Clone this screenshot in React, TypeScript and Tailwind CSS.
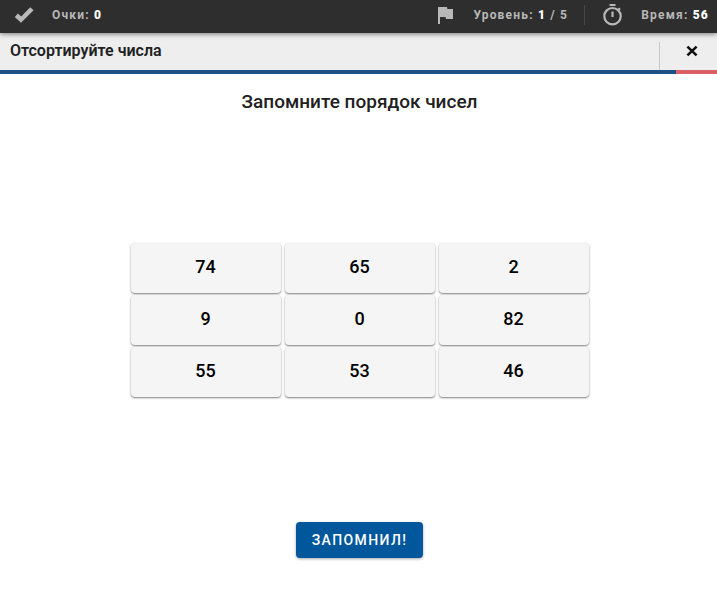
import { MdFlag } from "react-icons/md";

const numbers = [74, 65, 2, 9, 0, 82, 55, 53, 46];

const CheckIcon = () => (
  <svg viewBox="0 0 20 16" className="h-4 w-5 shrink-0" fill="currentColor" aria-hidden="true">
    <path d="M16.2 0.2 L19.6 3.3 L7 15.8 L0.8 10 L3.9 6.5 L7.2 9.4 Z" />
  </svg>
);

const CloseIcon = () => (
  <svg viewBox="0 0 12 12" className="size-3" fill="none" stroke="currentColor" strokeWidth="2.6" aria-hidden="true">
    <path d="M1.4 1.6 L10.6 10.4 M10.6 1.6 L1.4 10.4" />
  </svg>
);

const TimerIcon = () => (
  <svg viewBox="0 0 24 24" className="size-6 shrink-0" fill="none" stroke="currentColor" strokeWidth="2.2" aria-hidden="true">
    <circle cx="11.5" cy="13.2" r="8.2" />
    <path d="M8.5 2 H14.5 M11.5 8.5 V14 M17.2 7 L19 5.2" />
  </svg>
);

const StatusBar = () => (
  <header className="relative flex h-[33px] items-center bg-[#2e2e2e] pr-2 pb-1 pl-3.5 text-xs font-bold tracking-widest text-[#b8b8b8] shadow-[0_1px_5px_rgba(0,0,0,0.5)]">
    <CheckIcon />
    <span className="ml-[18px]">Очки: <b className="text-white">0</b></span>
    <div className="ml-auto flex items-center">
      <MdFlag className="size-6 shrink-0" />
      <span className="ml-4">Уровень: <b className="text-white">1</b> / 5</span>
      <div className="mx-4 h-5 w-px bg-[#484848]" />
      <TimerIcon />
      <span className="ml-4">Время: <b className="text-white">56</b></span>
    </div>
  </header>
);

const TitleBar = () => (
  <div className="flex h-[37px] items-center justify-between bg-[#eeeeee] pl-2.5">
    <h1 className="pb-0.5 text-base font-semibold text-[#212121]">Отсортируйте числа</h1>
    <div className="flex h-7 w-[58px] self-end border-l border-[#c8c8c8]">
      <button type="button" aria-label="Закрыть" className="flex flex-1 cursor-pointer justify-center pt-[3px] pl-1.5 text-[#111111]">
        <CloseIcon />
      </button>
    </div>
  </div>
);

const Progress = ({ value }: { value: number }) => (
  <div className="h-1 bg-[#db6066]">
    <div className="h-full bg-[#1a5288]" style={{ width: `${value}%` }} />
  </div>
);

export default function App() {
  return (
    <div className="flex min-h-screen flex-col bg-white font-['Roboto',sans-serif]">
      <StatusBar />
      <TitleBar />
      <Progress value={94.3} />
      <main className="flex flex-1 flex-col items-center pt-4 pr-4 pb-[57px] pl-[18px]">
        <h2 className="pb-1 text-[19px] leading-6 font-medium text-[#212121]">Запомните порядок чисел</h2>
        <div className="my-auto grid w-full max-w-[458px] grid-cols-3 gap-x-1 gap-y-0.5">
          {numbers.map((n) => (
            <button
              key={n}
              type="button"
              className="h-[50px] cursor-pointer rounded-sm bg-[#f5f5f5] pb-0.5 text-lg font-medium text-black shadow-[0_1px_2px_rgba(0,0,0,0.5)]"
            >
              {n}
            </button>
          ))}
        </div>
        <button
          type="button"
          className="h-9 cursor-pointer rounded-sm bg-[#01579b] px-4 text-sm font-medium tracking-widest text-white uppercase shadow-[0_1px_3px_rgba(0,0,0,0.35)]"
        >
          Запомнил!
        </button>
      </main>
    </div>
  );
}
